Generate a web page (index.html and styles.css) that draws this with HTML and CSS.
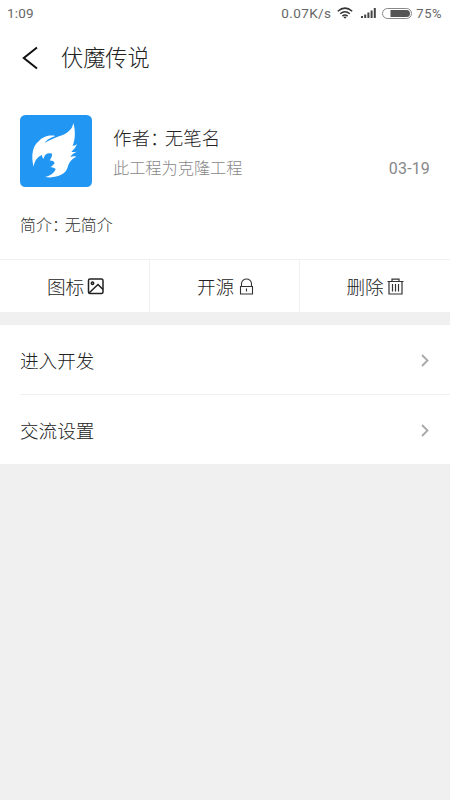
FILE: index.html
```html
<!DOCTYPE html>
<html lang="zh-CN">
<head>
<meta charset="utf-8">
<title>伏魔传说</title>
<link rel="stylesheet" href="styles.css">
</head>
<body>
<div class="top">
  <div class="status">
    <span class="time">1:09</span>
    <span class="speed">0.07K/s</span>
    <svg class="wifi" viewBox="0 0 16 12" width="16" height="12"><g fill="none" stroke="#333" stroke-width="1.500"><path d="M.8 4.200Q8-2 15.200 4.200"/><path d="M3.200 6.800Q8 2.600 12.800 6.800"/><path d="M5.400 9.100Q8 7 10.600 9.100"/></g><path d="M6.400 10.100Q8 9 9.600 10.100L8 11.800z" fill="#333"/></svg>
    <svg class="signal" viewBox="0 0 15 10" width="15" height="10" fill="#444"><path d="M0 8h2v2H0zM3.200 6.500h2V10h-2zM6.400 4.600h2V10h-2zM9.600 2.400h2V10h-2zM12.800 0h2v10h-2z"/></svg>
    <svg class="battery" viewBox="0 0 30 11" width="30" height="11"><rect x=".5" y=".5" width="29" height="10" rx="5" fill="#fff" stroke="#888"/><path d="M8.500 2H24.500a3.500 3.500 0 0 1 0 7H8.500z" fill="#555"/></svg>
    <span class="percent">75%</span>
  </div>
  <div class="nav">
    <svg viewBox="0 0 16 24" width="16" height="24" fill="none" stroke="#111" stroke-width="2"><path d="M15 1.500L1.800 12L15 22.500"/></svg>
    <h1>伏魔传说</h1>
  </div>
  <div class="project">
    <svg class="logo" viewBox="30 28 216 216" width="72" height="72"><rect x="30" y="28" width="216" height="216" rx="16" fill="#2196f3"/><path fill="#fff" d="M190 52C186 76 167 85 147 92C128 99 115 106 104 112C108 103 119 97 136 91C119 87 98 93 87 106C68 119 62 151 71 183C74 165 82 154 96 148C96 153 98 157 101 159C103 145 114 140 126 144C128 151 122 158 119 165C125 164 130 166 134 171C131 178 125 182 121 185C128 185 133 187 137 190C133 202 121 210 105 214C138 219 167 207 173 185C176 172 184 160 199 153C192 151 186 152 181 155C184 147 192 142 201 138C192 139 188 139 184 138C192 132 197 125 201 115C196 119 191 121 188 120C197 99 196 72 190 52Z"/></svg>
    <div class="info">
      <div class="author">作者<span class="colon">：</span>无笔名</div>
      <div class="meta"><span>此工程为克隆工程</span><span class="date">03-19</span></div>
    </div>
  </div>
  <div class="intro">简介<span class="colon">：</span>无简介</div>
  <div class="actions">
    <div class="action"><span>图标</span><svg viewBox="0 0 17 17" width="17" height="17" fill="none" stroke="#222" stroke-width="1.500"><rect x="1.500" y="1" width="14.500" height="14.500" rx="1.500"/><circle cx="5.500" cy="5.300" r="1.200"/><path d="M2 15L11 6.500L16 11.500"/></svg></div>
    <div class="action"><span>开源</span><svg viewBox="0 0 17 17" width="17" height="17" fill="none" stroke="#333" stroke-width="1.100"><path d="M3.500 8.500h12v7.500h-12zM4.500 8.500V5.500a5 4.500 0 0 1 10 0V8.500M9.500 10.500v3"/></svg></div>
    <div class="action"><span>删除</span><svg viewBox="0 0 17 17" width="17" height="17" fill="none" stroke="#333" stroke-width="1.200"><path d="M.5 3.500h16M5 3.500V1.200h7v2.300M2 3.500V16h13V3.500M5.500 6v7.500M8.500 6v7.500M11.500 6v7.500"/></svg></div>
  </div>
</div>
<div class="list">
  <div class="row"><span>进入开发</span><svg viewBox="0 0 8 13" width="8" height="13"><path d="M1 1L6.500 6.500L1 12"/></svg></div>
  <div class="row"><span>交流设置</span><svg viewBox="0 0 8 13" width="8" height="13"><path d="M1 1L6.500 6.500L1 12"/></svg></div>
</div>
</body>
</html>
```
FILE: styles.css
```css
* { box-sizing: border-box; }
body {
  margin: 0;
  height: 800px;
  background: #f0f0f0;
  color: #222;
  font-family: Roboto, "Noto Sans CJK SC", sans-serif;
  font-weight: 300;
}
svg { display: block; flex: none; }
.top { height: 312px; background: #fff; display: flex; flex-direction: column; }
.status {
  height: 26px;
  padding: 0 8px 0 7px;
  display: flex;
  align-items: center;
  font-size: 13.500px;
  font-weight: 400;
  color: #666;
}
.time { flex: 1; letter-spacing: .2px; }
.speed { letter-spacing: .4px; }
.wifi { margin-left: 6px; }
.signal { margin-left: 8px; }
.battery { margin-left: 6px; }
.percent { margin-left: 4px; font-size: 13px; letter-spacing: .5px; }
.nav { height: 64px; padding-left: 22px; display: flex; align-items: center; }
.nav h1 { margin: 0 0 0 23px; font-size: 22.200px; line-height: 30px; font-weight: 300; }
.project { height: 72px; margin: 24px 20px 0; display: flex; }
.logo { margin-top: 1px; }
.info { flex: 1; margin-left: 21px; padding-top: 11px; }
.author { font-size: 18.500px; line-height: 28px; }
.colon { font-feature-settings: "halt"; margin-right: .3em; }
.meta { display: flex; justify-content: space-between; font-size: 16.200px; line-height: 32px; color: #888; }
.date { font-size: 16px; font-weight: 400; letter-spacing: .15px; }
.intro { margin: 27px 20px 0; font-size: 16px; line-height: 26px; color: #333; }
.actions { margin-top: auto; height: 53px; display: grid; grid-template-columns: repeat(3, 1fr); border-top: 1px solid #f0f0f0; }
.action { display: flex; align-items: center; justify-content: center; gap: 3px; font-size: 18.600px; padding-left: 2px; }
.action:last-child { padding-left: 0; }
.action span { margin-top: -1px; }
.action svg { margin-top: 1px; }
.action:not(:last-child) { border-right: 1px solid #f0f0f0; }
.list { margin-top: 13px; background: #fff; padding-left: 20px; }
.row { height: 69px; display: flex; align-items: center; justify-content: space-between; padding-right: 21px; font-size: 18.600px; }
.row span { margin-top: -1px; }
.row svg { margin-top: 1px; }
.row + .row { height: 70px; border-top: 1px solid #f0f0f0; }
.row path { fill: none; stroke: #aaa; stroke-width: 1.900; }
```
